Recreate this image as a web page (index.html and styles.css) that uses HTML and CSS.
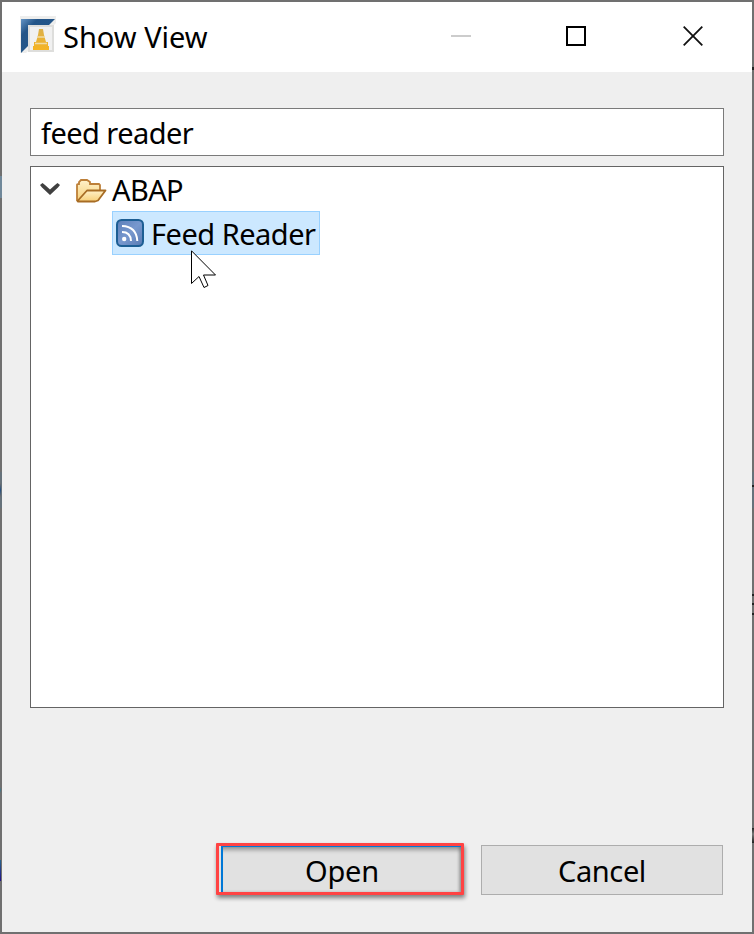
FILE: index.html
```html
<!DOCTYPE html>
<html lang="en">
<head>
<meta charset="utf-8">
<title>Show View</title>
<link rel="stylesheet" href="styles.css">
</head>
<body>
<main class="dialog">
  <header class="titlebar">
    <svg class="app-icon" width="36" height="38" viewBox="0 0 36 38">
      <defs>
        <linearGradient id="blue" x1="0" y1="0" x2="1" y2="1"><stop offset="0" stop-color="#6595c5"/><stop offset=".25" stop-color="#245588"/><stop offset="1" stop-color="#23588b"/></linearGradient>
        <linearGradient id="cone" x1="0" y1="0" x2="0" y2="1"><stop offset="0" stop-color="#dcb04a"/><stop offset="1" stop-color="#f5b424"/></linearGradient>
      </defs>
      <path d="M0 0H36V7L6 37H0Z" fill="#eeeeed"/>
      <path d="M1 3H35L1 37Z" fill="url(#blue)"/>
      <rect x="9" y="10" width="24" height="25" fill="#f1f1f1" stroke="#dededc" stroke-width="2"/>
      <path d="M19 13h4l1 6 2 7h2v4h1v4H13v-4h1v-4h2l2-7z" fill="url(#cone)"/>
      <path d="M17 21h8M15 27.500h12" stroke="#f0dca6" stroke-width="1.600"/>
    </svg>
    <h1 class="title"><span>Show View</span></h1>
    <div class="window-controls">
      <svg class="minimize" width="20" height="20" viewBox="0 0 20 20"><path d="M0 10H20" stroke="#ccc" stroke-width="2"/></svg>
      <svg width="20" height="20" viewBox="0 0 20 20"><path d="M1 1H19V19H1Z" fill="none" stroke="#000" stroke-width="2"/></svg>
      <svg width="20" height="20" viewBox="0 0 20 20"><path d="M.7.7 19.300 19.300M19.300.7.7 19.300" stroke="#111" stroke-width="1.800"/></svg>
    </div>
  </header>
  <section class="content">
    <div class="filter"><span class="filter-text">feed reader</span></div>
    <div class="tree">
      <div class="folder-row">
        <svg class="chevron" width="20" height="12" viewBox="0 0 20 12"><path d="M0 2 2.500 0 5 2 10 6.500 15 2 17.500 0 20 2 18 4.500 10 12 2 4.500Z" fill="#404040"/></svg>
        <svg class="folder" width="31" height="24" viewBox="0 0 31 24">
          <defs><linearGradient id="fold" x1="0" y1="0" x2="0" y2="1"><stop offset="0" stop-color="#fff1c9"/><stop offset="1" stop-color="#f7cf78"/></linearGradient></defs>
          <path d="M1 22V6Q1 5 3 5V3L5 1H11L14 3V5H23L24 6V12" fill="url(#fold)" stroke="#bd7f38" stroke-width="1.800"/>
          <path d="M1.500 22 11 11.500H29.500L22 21.500 19 22.500H2Z" fill="url(#fold)" stroke="#a76c24" stroke-width="1.800" stroke-linejoin="round"/>
        </svg>
        <span class="folder-name">ABAP</span>
      </div>
      <div class="item-row">
        <svg width="28" height="28" viewBox="0 0 28 28">
          <defs><linearGradient id="rss" x1="0" y1="0" x2="1" y2="1"><stop offset="0" stop-color="#5c7fb9"/><stop offset=".5" stop-color="#7898ce"/><stop offset="1" stop-color="#587ab3"/></linearGradient></defs>
          <rect x="1" y="1" width="26" height="26" rx="4.500" fill="url(#rss)" stroke="#1c5e94" stroke-width="2"/>
          <circle cx="8.200" cy="20" r="2.200" fill="#fff"/>
          <path d="M6 13Q14.500 13 15 22M6 7Q20.500 7.500 21.300 22" fill="none" stroke="#fff" stroke-width="2"/>
        </svg>
        <span class="item-name">Feed Reader</span>
        <svg class="pointer" width="26" height="39" viewBox="0 0 26 39"><path d="M.5.800V33.500L8 26.500 13 37.500 17 35.500 12.500 25H24.500Z" fill="#fff" stroke="#000"/></svg>
      </div>
    </div>
    <footer class="actions">
      <button class="button open"><span>Open</span></button>
      <button class="button cancel"><span>Cancel</span></button>
    </footer>
  </section>
</main>
</body>
</html>
```
FILE: styles.css
```css
* { box-sizing: border-box; }
body {
  margin: 0;
  height: 934px;
  padding: 2px;
  overflow: hidden;
  color: #000;
  font: 29px/40px "Noto Sans", sans-serif;
  background:
    linear-gradient(#70889a, #70889a) 0 176px / 2px 22px no-repeat,
    linear-gradient(#707070, #234f81, #707070) 0 483px / 1px 14px no-repeat,
    linear-gradient(#66727b, #66727b) 0 472px / 2px 36px no-repeat,
    linear-gradient(#707070, #40798b, #707070) 0 787px / 1px 6px no-repeat,
    linear-gradient(#27658a, #22118a) 0 860px / 1px 21px no-repeat,
    linear-gradient(#222, #222) 752px 67px / 2px 3px no-repeat,
    linear-gradient(#222, #222) 752px 485px / 2px 2px no-repeat,
    linear-gradient(#66727b, #66727b) 752px 472px / 2px 36px no-repeat,
    linear-gradient(#222, #222) 752px 594px / 2px 2px no-repeat,
    linear-gradient(#222, #222) 752px 603px / 2px 2px no-repeat,
    linear-gradient(#222, #222) 752px 613px / 2px 2px no-repeat,
    linear-gradient(#222, #777 40%, #222) 752px 828px / 2px 15px no-repeat,
    #707070;
}
svg { display: block; flex: none; }
span { white-space: nowrap; }
.dialog { width: 750px; height: 930px; background: #efefef; }
.titlebar { height: 70px; padding-left: 18px; background: #fff; display: flex; align-items: flex-start; }
.app-icon { margin-top: 14px; }
.title { margin: 15px 0 0 7px; font: inherit; }
.window-controls { display: flex; gap: 96px; margin: 24px 49px 0 auto; }
.window-controls .minimize { margin-right: -1px; }
.window-controls svg:last-child { margin-left: 1px; }
.content { padding: 36px 28px 0; }
.filter { height: 48px; border: 1px solid #7a7a7a; background: #fff; padding: 4px 10px; }
.filter-text { letter-spacing: -.55px; }
.tree { height: 542px; margin-top: 10px; border: 1px solid #646464; background: #fff; }
.folder-row { height: 44px; display: flex; align-items: flex-start; padding-left: 9px; }
.chevron { margin-top: 16px; }
.folder { margin: 12px 0 0 16px; }
.folder-name { margin: 3px 0 0 5px; letter-spacing: -.6px; }
.item-row { position: relative; width: 208px; height: 44px; margin-left: 81px; padding: 7px 0 0 3px; display: flex; background: #cce8ff; border: 1px solid #99d1ff; }
.item-name { margin: -5px 0 0 7px; letter-spacing: -.5px; }
.pointer { position: absolute; left: 78px; top: 38px; }
.actions { display: flex; justify-content: flex-end; gap: 17px; margin: 135px 1px 0 0; }
.button { border: 0; padding: 0; font: inherit; color: inherit; background: #e1e1e1; display: flex; justify-content: center; }
.open { width: 248px; height: 52px; padding: 5px 0 0 4px; border: 3px solid #ff4343; border-radius: 1px; box-shadow: 1px 3px 4px #0007, inset 2px 0 #e1e1e1, inset 4px 0 #0078d7, inset 0 1px #0078d7, inset 0 4px 4px #0005, inset -2px 0 3px #0003; }
.open span { letter-spacing: -.2px; }
.cancel { width: 242px; height: 50px; margin-top: 2px; padding-top: 5px; border: 1px solid #adadad; }
.cancel span { letter-spacing: -.4px; }
```
